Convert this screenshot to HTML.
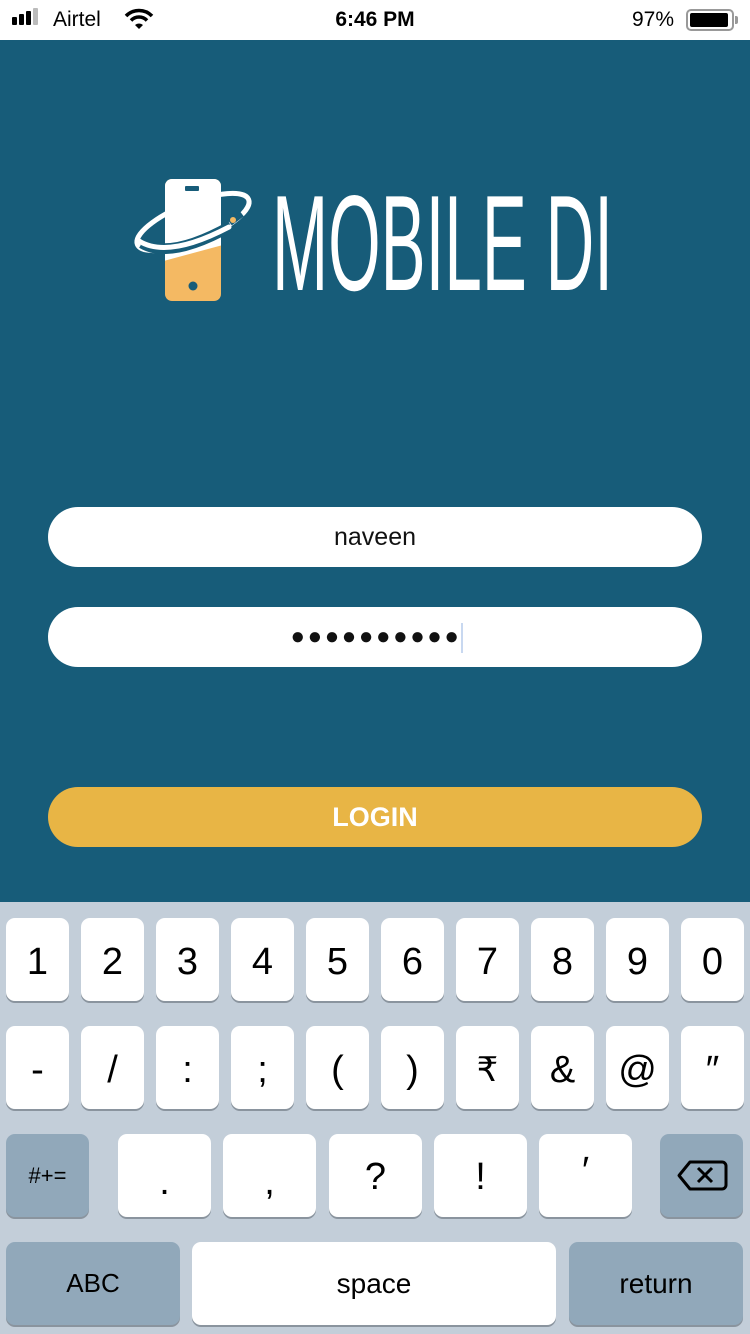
<!DOCTYPE html>
<html><head><meta charset="utf-8"><style>
*{margin:0;padding:0;box-sizing:border-box}
body{width:750px;height:1334px;position:relative;overflow:hidden;font-family:"Liberation Sans",sans-serif;background:#175c79}
.sb{position:absolute;left:0;top:0;width:750px;height:40px;background:#fff;font-size:21px;color:#000}
.inp{position:absolute;left:48px;width:654px;height:60px;border-radius:30px;background:#fff;text-align:center;line-height:60px;font-size:25px;color:#111}
.kb{position:absolute;left:0;top:902px;width:750px;height:432px;background:#c3ced9}
.k{position:absolute;background:#fff;border-radius:9px;box-shadow:0 2px 0 #8a949e;text-align:center;color:#000;font-size:38px}
.r1{line-height:89px !important}
.g{background:#91a8ba}
</style></head><body>
<div class="sb">
 <div style="position:absolute;left:12px;top:17px;width:5px;height:8px;background:#000;border-radius:1px"></div>
 <div style="position:absolute;left:19px;top:14px;width:5px;height:11px;background:#000;border-radius:1px"></div>
 <div style="position:absolute;left:26px;top:11px;width:5px;height:14px;background:#000;border-radius:1px"></div>
 <div style="position:absolute;left:33px;top:8px;width:5px;height:17px;background:#bbb;border-radius:1px"></div>
 <div style="position:absolute;left:53px;top:8px">Airtel</div>
 <svg style="position:absolute;left:124px;top:8px" width="30" height="22" viewBox="0 0 30 22"><path d="M2 8 A18 18 0 0 1 28 8" stroke="#000" stroke-width="3.5" fill="none"/><path d="M7 12.5 A11 11 0 0 1 23 12.5" stroke="#000" stroke-width="3.5" fill="none"/><path d="M11 17 L15 21 L19 17 A6 6 0 0 0 11 17Z" fill="#000"/></svg>
 <div style="position:absolute;left:0;width:750px;top:8px;text-align:center;font-weight:bold">6:46 PM</div>
 <div style="position:absolute;left:632px;top:8px">97%</div>
 <div style="position:absolute;left:686px;top:9px;width:48px;height:22px;border:2px solid #999;border-radius:5px;padding:2px"><div style="width:38px;height:14px;background:#000;border-radius:2px"></div></div>
 <div style="position:absolute;left:735px;top:16px;width:3px;height:8px;background:#999;border-radius:0 2px 2px 0"></div>
</div>
<svg style="position:absolute;left:130px;top:175px" width="130" height="130" viewBox="130 175 130 130">
 <defs><clipPath id="c"><rect x="165" y="179" width="56" height="122" rx="7"/></clipPath></defs>
 <ellipse cx="193" cy="222" rx="60" ry="19" transform="rotate(-22 193 222)" stroke="#fff" stroke-width="5" fill="none"/>
 <g clip-path="url(#c)"><rect x="165" y="179" width="56" height="122" fill="#f4b963"/><path d="M160 175 L230 175 L230 243 L160 262Z" fill="#fff"/></g>
 <rect x="185" y="186" width="14" height="5" rx="1" fill="#175c79"/>
 <circle cx="193" cy="286" r="4.5" fill="#175c79"/>
 <path d="M142 243 Q170 260 231 226" stroke="#175c79" stroke-width="11" fill="none"/>
 <path d="M139 241 Q168 259 229 227" stroke="#fff" stroke-width="5" fill="none" stroke-linecap="round"/>
 <path d="M230 223 L242 214" stroke="#175c79" stroke-width="6"/>
 <circle cx="233" cy="220" r="3" fill="#f4b963"/>
</svg>
<svg style="position:absolute;left:0;top:0" width="750" height="320"><text x="272" y="290" font-family="Liberation Sans" font-size="136" fill="#fff" textLength="341" lengthAdjust="spacingAndGlyphs">MOBILE DI</text></svg>
<div class="inp" style="top:507px">naveen</div>
<div class="inp" style="top:607px;font-size:24px;letter-spacing:2.6px;padding-left:4px">●●●●●●●●●●<span style="display:inline-block;width:2px;height:30px;background:#c8d8f0;vertical-align:middle"></span></div>
<div class="inp" style="top:787px;background:#e8b545;color:#fff;font-weight:bold;font-size:27px">LOGIN</div>
<div class="kb">
 <div class="k r1" style="left:6px;top:16px;width:63px;height:83px">1</div>
 <div class="k r1" style="left:81px;top:16px;width:63px;height:83px">2</div>
 <div class="k r1" style="left:156px;top:16px;width:63px;height:83px">3</div>
 <div class="k r1" style="left:231px;top:16px;width:63px;height:83px">4</div>
 <div class="k r1" style="left:306px;top:16px;width:63px;height:83px">5</div>
 <div class="k r1" style="left:381px;top:16px;width:63px;height:83px">6</div>
 <div class="k r1" style="left:456px;top:16px;width:63px;height:83px">7</div>
 <div class="k r1" style="left:531px;top:16px;width:63px;height:83px">8</div>
 <div class="k r1" style="left:606px;top:16px;width:63px;height:83px">9</div>
 <div class="k r1" style="left:681px;top:16px;width:63px;height:83px">0</div>
 <div class="k r1" style="left:6px;top:124px;width:63px;height:83px">-</div>
 <div class="k r1" style="left:81px;top:124px;width:63px;height:83px">/</div>
 <div class="k r1" style="left:156px;top:124px;width:63px;height:83px">:</div>
 <div class="k r1" style="left:231px;top:124px;width:63px;height:83px">;</div>
 <div class="k r1" style="left:306px;top:124px;width:63px;height:83px">(</div>
 <div class="k r1" style="left:381px;top:124px;width:63px;height:83px">)</div>
 <div class="k r1" style="left:456px;top:124px;width:63px;height:83px;font-family:'DejaVu Sans',sans-serif;font-size:34px">₹</div>
 <div class="k r1" style="left:531px;top:124px;width:63px;height:83px">&amp;</div>
 <div class="k r1" style="left:606px;top:124px;width:63px;height:83px">@</div>
 <div class="k r1" style="left:681px;top:124px;width:63px;height:83px">″</div>
 <div class="k g" style="left:6px;top:232px;width:83px;height:83px;line-height:83px;font-size:22px">#+=</div>
 <div class="k" style="left:118px;top:232px;width:93px;height:83px;line-height:96px">.</div>
 <div class="k" style="left:223px;top:232px;width:93px;height:83px;line-height:96px">,</div>
 <div class="k" style="left:329px;top:232px;width:93px;height:83px;line-height:86px">?</div>
 <div class="k" style="left:434px;top:232px;width:93px;height:83px;line-height:86px">!</div>
 <div class="k" style="left:539px;top:232px;width:93px;height:83px;line-height:74px">′</div>
 <div class="k g" style="left:660px;top:232px;width:83px;height:83px"><svg width="83" height="83" viewBox="0 0 83 83"><path d="M30 28 H62 a4 4 0 0 1 4 4 V51 a4 4 0 0 1 -4 4 H30 L19 41.5Z" stroke="#000" stroke-width="3" fill="none" stroke-linejoin="round"/><path d="M38 34 L52 48 M52 34 L38 48" stroke="#000" stroke-width="3"/></svg></div>
 <div class="k g" style="left:6px;top:340px;width:174px;height:83px;line-height:83px;font-size:26px">ABC</div>
 <div class="k" style="left:192px;top:340px;width:364px;height:83px;line-height:83px;font-size:28px">space</div>
 <div class="k g" style="left:569px;top:340px;width:174px;height:83px;line-height:83px;font-size:28px">return</div>
</div>
</body></html>
